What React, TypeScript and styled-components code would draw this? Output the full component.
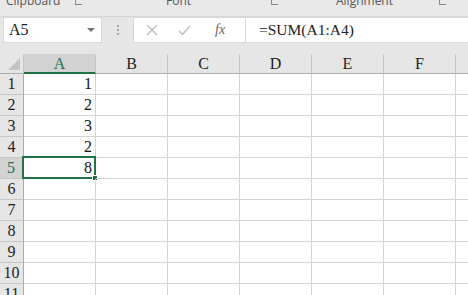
import React from "react";
import styled, { createGlobalStyle } from "styled-components";

const Global = createGlobalStyle`
  html, body { margin: 0; padding: 0; background: #e6e6e6; }
  * { box-sizing: border-box; }
`;

const Page = styled.div`
  width: 468px;
  height: 295px;
  overflow: hidden;
  background: #e6e6e6;
  font-family: "Liberation Serif", "Times New Roman", serif;
  display: flex;
  flex-direction: column;
  & > * { flex-shrink: 0; }
`;

const Ribbon = styled.div`
  height: 17px;
  background: #e9e9e9;
  border-bottom: 1px solid #d6d6d6;
  display: flex;
  overflow: hidden;
  font-family: "Open Sans", "Liberation Sans", sans-serif;
  font-size: 12px;
  color: #555;
`;

const RibbonGroup = styled.div<{ $w: number; $pad: number }>`
  width: ${(p) => p.$w}px;
  padding-left: ${(p) => p.$pad}px;
  display: flex;
  align-items: flex-start;
  justify-content: space-between;
  padding-right: 6px;
  line-height: 12px;
  margin-top: -5px;
`;

const Launcher = styled.span`
  margin-top: 4px;
  width: 7px;
  height: 6px;
  border-left: 1px solid #888;
  border-bottom: 1px solid #888;
`;

const FormulaBar = styled.div`
  height: 26px;
  display: flex;
  align-items: stretch;
  padding-left: 3px;
`;

const NameBox = styled.div`
  width: 99px;
  background: #fff;
  border: 1px solid #d8d8d8;
  display: flex;
  align-items: center;
  justify-content: space-between;
  padding: 0 6px 0 5px;
  font-size: 16px;
  color: #222;
`;

const Caret = styled.span`
  width: 0;
  height: 0;
  border-left: 4px solid transparent;
  border-right: 4px solid transparent;
  border-top: 4px solid #777;
`;

const Dots = styled.div`
  width: 31px;
  display: flex;
  flex-direction: column;
  align-items: center;
  justify-content: center;
  gap: 2px;
`;

const Dot = styled.span`
  width: 2px;
  height: 2px;
  background: #aaa;
`;

const FormulaBox = styled.div`
  flex: 1;
  background: #fff;
  border: 1px solid #d8d8d8;
  border-right: none;
  display: flex;
  align-items: center;
`;

const Buttons = styled.div`
  width: 112px;
  height: 100%;
  display: flex;
  align-items: center;
  border-right: 1px solid #dadada;
  padding-left: 12px;
  gap: 20px;
`;

const Fx = styled.span`
  font-style: italic;
  font-size: 14px;
  color: #666;
  margin-left: 4px;
`;

const Input = styled.div`
  padding-left: 13px;
  font-size: 15.5px;
  color: #222;
`;

const Gap = styled.div`
  height: 11px;
`;

const Grid = styled.div`
  display: grid;
  grid-template-columns: 24px repeat(7, 72px);
  grid-template-rows: 20px;
  grid-auto-rows: 21px;
  background: #fff;
  font-size: 16px;
`;

const Corner = styled.div`
  background: #e6e6e6;
  border-right: 1px solid #c6c6c6;
  border-bottom: 1px solid #ababab;
  position: relative;
  &::after {
    content: "";
    position: absolute;
    right: 3px;
    bottom: 3px;
    width: 0;
    height: 0;
    border-left: 12px solid transparent;
    border-bottom: 12px solid #c4c4c4;
  }
`;

const ColHead = styled.div<{ $sel?: boolean }>`
  background: ${(p) => (p.$sel ? "#d2d2d2" : "#e6e6e6")};
  color: ${(p) => (p.$sel ? "#217346" : "#222")};
  border-right: 1px solid #c6c6c6;
  border-bottom: ${(p) => (p.$sel ? "2px solid #217346" : "1px solid #ababab")};
  display: flex;
  align-items: center;
  justify-content: center;
  padding-top: ${(p) => (p.$sel ? "1px" : "0")};
`;

const RowHead = styled.div<{ $sel?: boolean }>`
  background: ${(p) => (p.$sel ? "#d2d2d2" : "#e6e6e6")};
  color: ${(p) => (p.$sel ? "#217346" : "#222")};
  border-right: ${(p) => (p.$sel ? "2px solid #217346" : "1px solid #ababab")};
  border-bottom: 1px solid #c6c6c6;
  display: flex;
  align-items: center;
  justify-content: center;
`;

const Cell = styled.div`
  border-right: 1px solid #d4d4d4;
  border-bottom: 1px solid #d4d4d4;
  display: flex;
  align-items: center;
  justify-content: flex-end;
  padding-right: 3px;
  color: #111;
  position: relative;
`;

const Selection = styled.div`
  position: absolute;
  left: -2px;
  top: -2px;
  right: -1px;
  bottom: -1px;
  border: 2px solid #217346;
  pointer-events: none;
`;

const Handle = styled.div`
  position: absolute;
  right: -4px;
  bottom: -4px;
  width: 6px;
  height: 6px;
  background: #217346;
  border: 1px solid #fff;
`;

const cols = ["A", "B", "C", "D", "E", "F", ""];
const values: Record<number, string> = { 1: "1", 2: "2", 3: "3", 4: "2", 5: "8" };

const XIcon = () => (
  <svg width="12" height="12" viewBox="0 0 12 12">
    <path d="M1 1 L11 11 M11 1 L1 11" stroke="#bdbdbd" strokeWidth="1.3" fill="none" />
  </svg>
);

const CheckIcon = () => (
  <svg width="13" height="11" viewBox="0 0 13 11">
    <path d="M1 6 L4.5 9.5 L12 1" stroke="#bdbdbd" strokeWidth="1.5" fill="none" />
  </svg>
);

export default function App() {
  const rows = Array.from({ length: 11 }, (_, i) => i + 1);
  return (
    <Page>
      <Global />
      <Ribbon>
        <RibbonGroup $w={88} $pad={6}>
          <span>Clipboard</span>
          <Launcher />
        </RibbonGroup>
        <RibbonGroup $w={196} $pad={78}>
          <span>Font</span>
          <Launcher />
        </RibbonGroup>
        <RibbonGroup $w={168} $pad={52}>
          <span>Alignment</span>
          <Launcher />
        </RibbonGroup>
      </Ribbon>
      <FormulaBar>
        <NameBox>
          <span>A5</span>
          <Caret />
        </NameBox>
        <Dots>
          <Dot />
          <Dot />
          <Dot />
        </Dots>
        <FormulaBox>
          <Buttons>
            <XIcon />
            <CheckIcon />
            <Fx>fx</Fx>
          </Buttons>
          <Input>=SUM(A1:A4)</Input>
        </FormulaBox>
      </FormulaBar>
      <Gap />
      <Grid>
        <Corner />
        {cols.map((c, i) => (
          <ColHead key={i} $sel={c === "A"}>
            {c}
          </ColHead>
        ))}
        {rows.map((r) => (
          <React.Fragment key={r}>
            <RowHead $sel={r === 5}>{r}</RowHead>
            {cols.map((c, i) => (
              <Cell key={i}>
                {c === "A" ? values[r] : null}
                {c === "A" && r === 5 ? (
                  <Selection>
                    <Handle />
                  </Selection>
                ) : null}
              </Cell>
            ))}
          </React.Fragment>
        ))}
      </Grid>
    </Page>
  );
}
